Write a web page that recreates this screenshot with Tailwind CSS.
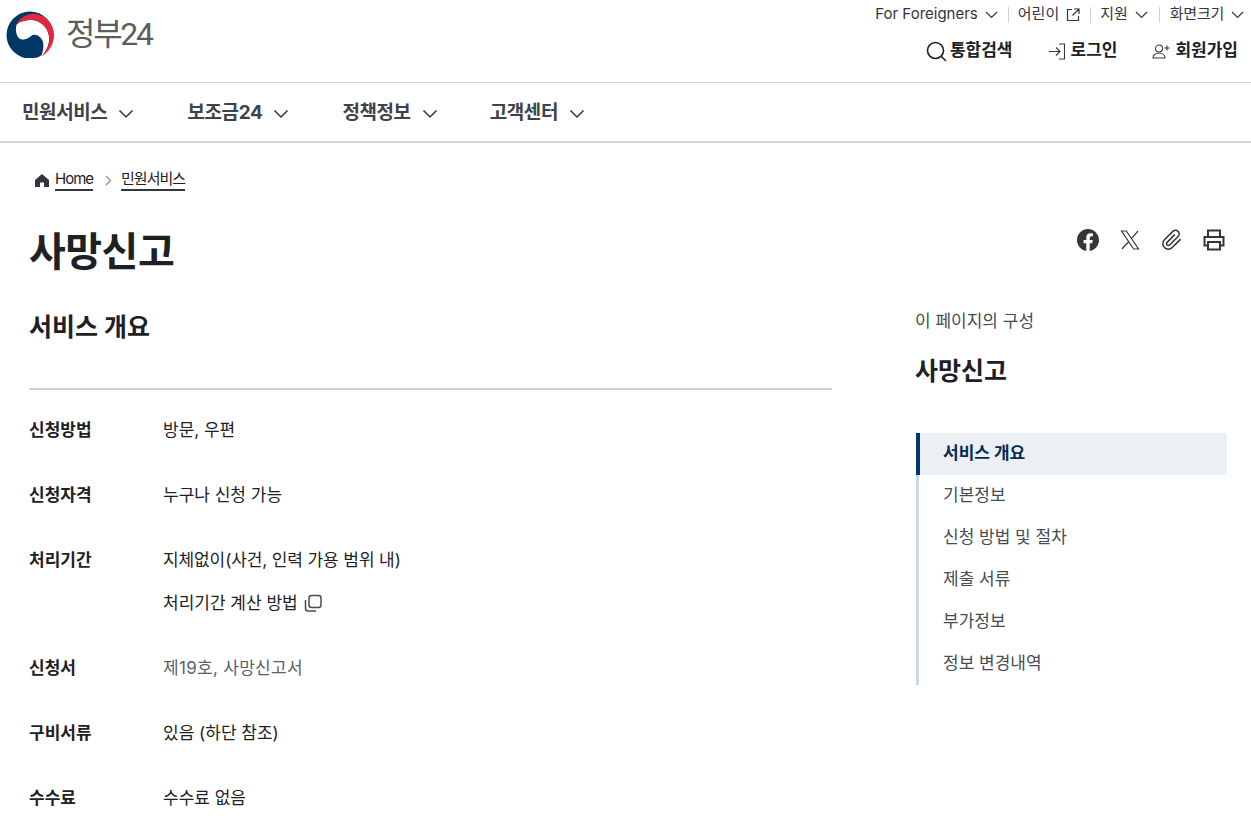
<!DOCTYPE html>
<html lang="ko">
<head>
    <meta charset="UTF-8">
    <meta name="viewport" content="width=device-width, initial-scale=1.0">
    <title>사망신고 | 정부24</title>
    <script src="https://cdn.jsdelivr.net/npm/@tailwindcss/browser@4"></script>
</head>
<body class="bg-white text-[#1e2124] h-[825px] overflow-hidden font-['Inter','Noto_Sans_CJK_KR',sans-serif]">
    <!-- header -->
    <header class="h-[83px] border-b border-[#d6d6d6] flex justify-between pl-[6px] pr-[7px]">
        <div class="flex items-center gap-[12px] h-[68px]">
            <svg class="w-[48px] h-[47px]" viewBox="0 0 48 47">
                <circle cx="24" cy="24" r="23.500" fill="#003764"/>
                <path d="M11 13C15 10 20 9 25 9C33 9 41.500 15 43 25C44 32 41 40 35 46C37 41 38 35 37 31C35 25 29 22 25 25C21 29 15 30 12 26C10 23 9 17 11 13Z" fill="#fff"/>
                <path d="M10 14C14 6 22 2 30 3C40 4.500 48 13 48 24C48 33 43 41 35 46C41 40 44 32 43 25C41.500 15 33 9 25 9C18 9 13 11 10 14Z" fill="#e5263f"/>
            </svg>
            <span class="text-[32px] leading-none tracking-[-2.300px] text-[#5c5c5c] font-['Roboto','Noto_Sans_CJK_KR',sans-serif] mb-[1px]">정부24</span>
        </div>
        <div class="flex flex-col items-end">
            <div class="flex items-center h-[28px] pt-[1px] text-[15px] text-[#33363d]">
                <a class="flex items-center gap-[7px]">For Foreigners
                    <svg class="w-[13px] h-[8px]" viewBox="0 0 13 8" fill="none" stroke="#33363d" stroke-width="1.200"><path d="M1 1l5.500 5.500L12 1"/></svg>
                </a>
                <span class="w-px h-[16px] bg-[#cdd1d5] ml-[10px] mr-[9px]"></span>
                <a class="flex items-center gap-[7px]">어린이
                    <svg class="w-[14px] h-[14px]" viewBox="0 0 14 14" fill="none" stroke="#33363d" stroke-width="1.200"><path d="M6 1.500H1.500v11h11V8M8 1h5v5M13 1L6.500 7.500"/></svg>
                </a>
                <span class="w-px h-[16px] bg-[#cdd1d5] ml-[10px] mr-[9px]"></span>
                <a class="flex items-center gap-[7px]">지원
                    <svg class="w-[13px] h-[8px]" viewBox="0 0 13 8" fill="none" stroke="#33363d" stroke-width="1.200"><path d="M1 1l5.500 5.500L12 1"/></svg>
                </a>
                <span class="w-px h-[16px] bg-[#cdd1d5] ml-[11px] mr-[10px]"></span>
                <a class="flex items-center gap-[7px] tracking-[-0.25px]">화면크기
                    <svg class="w-[13px] h-[8px]" viewBox="0 0 13 8" fill="none" stroke="#33363d" stroke-width="1.200"><path d="M1 1l5.500 5.500L12 1"/></svg>
                </a>
            </div>
            <div class="flex items-center h-[46px] text-[17px] font-bold text-[#1e2124] pr-[6px]">
                <a class="flex items-center gap-[3px]">
                    <svg class="w-[21px] h-[21px]" viewBox="0 0 21 21" fill="none" stroke="#1e2124" stroke-width="1.600"><circle cx="9.500" cy="9.500" r="8"/><path d="M15 15l5 5"/></svg>
                    통합검색
                </a>
                <a class="flex items-center gap-[5px] ml-[35px]">
                    <svg class="w-[18px] h-[17px]" viewBox="0 0 18 17" fill="none" stroke="#33363d" stroke-width="1.100"><path d="M11 1h5.500v15H11M1 8.500h11M8 4.500l4 4-4 4"/></svg>
                    로그인
                </a>
                <a class="flex items-center gap-[5px] ml-[35px]">
                    <svg class="w-[18px] h-[15px]" viewBox="0 0 18 15" fill="none" stroke="#33363d" stroke-width="1.100"><circle cx="7" cy="4.500" r="3.500"/><path d="M1 14c0-3 2.500-5 6-5s6 2 6 5H1zM12.500 4h5M15 1.500v5"/></svg>
                    회원가입
                </a>
            </div>
        </div>
    </header>

    <!-- nav -->
    <nav class="h-[60px] pt-[3px] border-b-2 border-[#d3d5d9] flex items-center pl-[22px] text-[19px] tracking-[-0.4px] font-bold text-[#3f4349]">
        <a class="flex items-center gap-[11px] mr-[53px]">민원서비스
            <svg class="w-[16px] h-[10px]" viewBox="0 0 16 10" fill="none" stroke="#33363d" stroke-width="1.500"><path d="M1.500 1.500L8 8l6.500-6.500"/></svg>
        </a>
        <a class="flex items-center gap-[11px] mr-[53px]">보조금24
            <svg class="w-[16px] h-[10px]" viewBox="0 0 16 10" fill="none" stroke="#33363d" stroke-width="1.500"><path d="M1.500 1.500L8 8l6.500-6.500"/></svg>
        </a>
        <a class="flex items-center gap-[11px] mr-[52px]">정책정보
            <svg class="w-[16px] h-[10px]" viewBox="0 0 16 10" fill="none" stroke="#33363d" stroke-width="1.500"><path d="M1.500 1.500L8 8l6.500-6.500"/></svg>
        </a>
        <a class="flex items-center gap-[11px]">고객센터
            <svg class="w-[16px] h-[10px]" viewBox="0 0 16 10" fill="none" stroke="#33363d" stroke-width="1.500"><path d="M1.500 1.500L8 8l6.500-6.500"/></svg>
        </a>
    </nav>

    <main class="pl-[29px] pr-[24px]">
        <!-- breadcrumb -->
        <div class="flex items-center h-[22px] mt-[26px] ml-[6px] text-[15px] tracking-[-1px] text-[#1e2124]">
            <svg class="w-[14px] h-[13px] mr-[6px]" viewBox="0 0 14 13" fill="#33363d"><path d="M7 0L0 6v7h5V8.500h4V13h5V6z"/></svg>
            <a class="border-b-2 border-[#33363d] leading-[20px]">Home</a>
            <svg class="w-[7px] h-[11px] ml-[12px] mr-[9px]" viewBox="0 0 7 11" fill="none" stroke="#8a8d93" stroke-width="1.200"><path d="M1 1l4.500 4.500L1 10"/></svg>
            <a class="border-b-2 border-[#33363d] leading-[20px]">민원서비스</a>
        </div>

        <!-- title row -->
        <div class="flex justify-between items-start mt-[34px]">
            <h1 class="text-[40px] leading-[54px] tracking-[-0.5px] font-bold text-[#1e2124]">사망신고</h1>
            <div class="flex items-center gap-[20px] mt-[4px] mr-[2px]">
                <svg class="w-[22px] h-[22px]" viewBox="0 0 24 24" fill="#33363d"><path d="M24 12.070C24 5.400 18.630 0 12 0S0 5.400 0 12.070c0 6.030 4.390 11.020 10.130 11.930v-8.440H7.080v-3.490h3.050V9.410c0-3.030 1.790-4.700 4.530-4.700 1.310 0 2.690.230 2.690.230v2.970h-1.510c-1.490 0-1.960.930-1.960 1.890v2.270h3.330l-.53 3.490h-2.800V24C19.610 23.090 24 18.100 24 12.070z"/></svg>
                <svg class="w-[22px] h-[22px]" viewBox="0 0 22 22" fill="none" stroke="#33363d" stroke-width="1.200"><path d="M2.500 2h4.800l12.200 18h-4.800zM19 2L12.200 9.800M9.800 12.500L3 20"/></svg>
                <svg class="w-[22px] h-[22px]" viewBox="0 0 24 24" fill="none" stroke="#33363d" stroke-width="1.700"><path d="M21.440 11.050l-9.190 9.190a6 6 0 0 1-8.490-8.490l9.190-9.190a4 4 0 0 1 5.660 5.660l-9.200 9.190a2 2 0 0 1-2.830-2.830l8.490-8.480"/></svg>
                <svg class="w-[22px] h-[22px]" viewBox="0 0 22 22" fill="none" stroke="#33363d" stroke-width="2"><path d="M5 8V1.500h12V8M5 16.500H1.500V8h19v8.500H17M5 13h12v7.500H5z"/></svg>
            </div>
        </div>

        <div class="flex justify-between mt-[31px]">
            <!-- content -->
            <section class="w-[803px]">
                <h2 class="text-[25px] leading-[34px] font-bold text-[#1e2124] h-[78px] border-b-[2px] border-[#cdd1d5] box-content">서비스 개요</h2>
                <dl class="text-[17px] leading-[24px] mt-[28px]">
                    <div class="flex h-[65px]">
                        <dt class="w-[134px] font-bold">신청방법</dt>
                        <dd>방문, 우편</dd>
                    </div>
                    <div class="flex h-[65px]">
                        <dt class="w-[134px] font-bold">신청자격</dt>
                        <dd>누구나 신청 가능</dd>
                    </div>
                    <div class="flex h-[108px]">
                        <dt class="w-[134px] font-bold">처리기간</dt>
                        <dd>
                            <p class="tracking-[-0.1px]">지체없이(사건, 인력 가용 범위 내)</p>
                            <a class="flex items-center gap-[6px] mt-[19px]">처리기간 계산 방법
                                <svg class="w-[18px] h-[18px]" viewBox="0 0 18 18" fill="none" stroke="#464c53" stroke-width="1.500"><rect x="5" y="1.500" width="12" height="12" rx="2.500"/><path d="M1.500 6v8.500a2.500 2.500 0 0 0 2.500 2.500h8"/></svg>
                            </a>
                        </dd>
                    </div>
                    <div class="flex h-[65px]">
                        <dt class="w-[134px] font-bold">신청서</dt>
                        <dd class="text-[#58616a] tracking-[0.3px]">제19호, 사망신고서</dd>
                    </div>
                    <div class="flex h-[65px]">
                        <dt class="w-[134px] font-bold">구비서류</dt>
                        <dd>있음 (하단 참조)</dd>
                    </div>
                    <div class="flex h-[64px]">
                        <dt class="w-[134px] font-bold">수수료</dt>
                        <dd>수수료 없음</dd>
                    </div>
                </dl>
            </section>

            <!-- page toc -->
            <aside class="w-[311px] -mt-[1px]">
                <p class="text-[17px] leading-[24px] text-[#464c53] -ml-[1px]">이 페이지의 구성</p>
                <p class="text-[25px] leading-[34px] font-bold mt-[21px] -ml-[1px]">사망신고</p>
                <ul class="mt-[45px] border-l-[3px] border-[#cdd6e4] text-[17px] text-[#464c53]">
                    <li class="h-[42px] flex items-center pl-[23px] -ml-[3px] border-l-[4px] border-[#003675] bg-[#ecf0f5] font-bold text-[#052b57]">서비스 개요</li>
                    <li class="h-[42px] flex items-center pl-[24px]">기본정보</li>
                    <li class="h-[42px] flex items-center pl-[24px]">신청 방법 및 절차</li>
                    <li class="h-[42px] flex items-center pl-[24px]">제출 서류</li>
                    <li class="h-[42px] flex items-center pl-[24px]">부가정보</li>
                    <li class="h-[42px] flex items-center pl-[24px]">정보 변경내역</li>
                </ul>
            </aside>
        </div>
    </main>
</body>
</html>
